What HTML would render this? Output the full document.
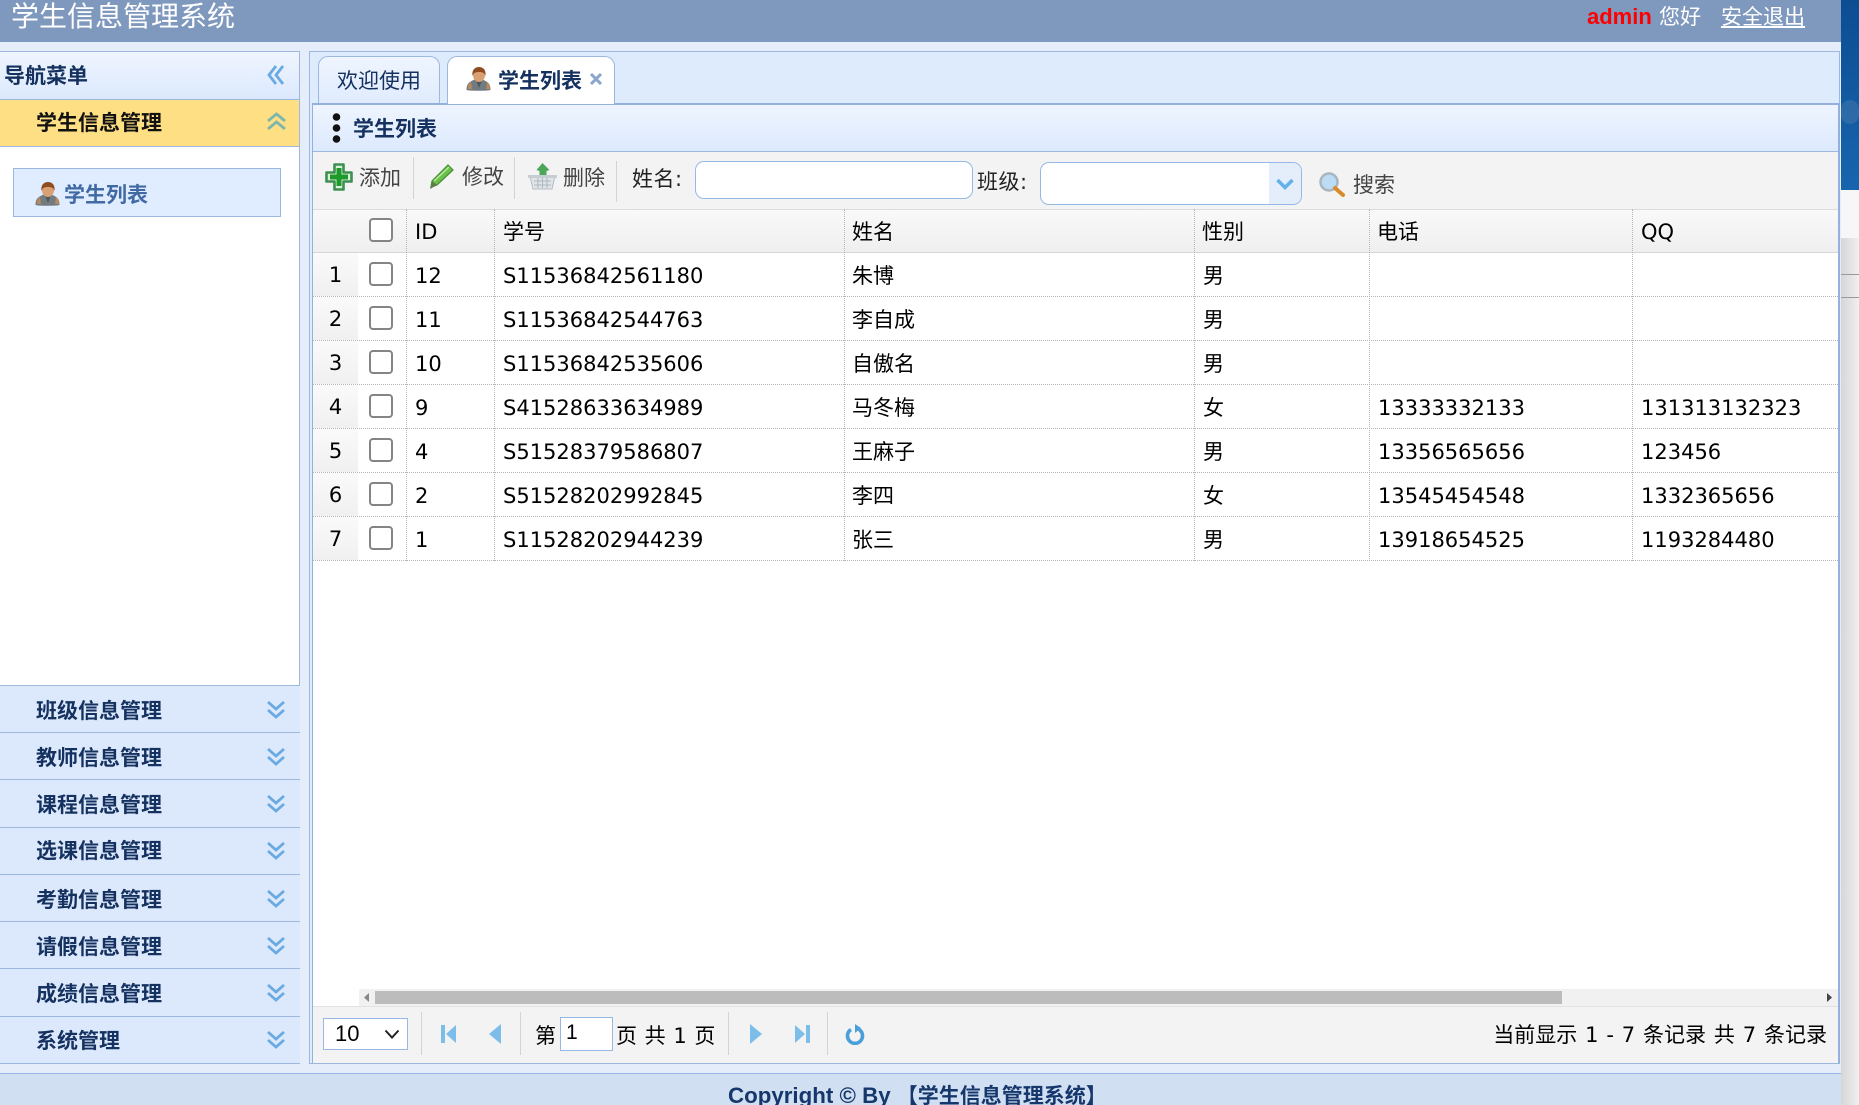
<!DOCTYPE html>
<html lang="zh">
<head>
<meta charset="utf-8">
<title>学生信息管理系统</title>
<style>
html,body{margin:0;padding:0;width:1859px;height:1105px;overflow:hidden;background:#fff;}
body{position:relative;font-family:"DejaVu Sans","Noto Sans CJK SC",sans-serif;font-size:21px;color:#000;}
div,span,svg{position:absolute;box-sizing:border-box;}
.t{white-space:nowrap;line-height:30px;height:30px;}
.t span{position:static;}
.menu{left:0;width:300px;height:48px;background:#dce9fd;border-top:1px solid #9cb8df;}
.menu .t{left:36px;top:10px;font-weight:bold;color:#14315f;}
.menu svg{left:267px;top:15px;}
.row{left:313px;width:1525px;height:44px;border-bottom:1px dotted #b5b5b5;background:#fff;line-height:43px;}
.row span{white-space:nowrap;top:2px;line-height:43px;}
.row .num{top:0;left:0;width:45px;height:43px;line-height:45px;background:linear-gradient(#fafafa,#f0f0f0);text-align:center;}
.cb{width:24px;height:24px;border:2px solid #858585;border-radius:4px;background:#fff;left:56px;top:9px;}
.c1{left:102px}.c2{left:190px}.c3{left:539px}.c4{left:890px}.c5{left:1065px}.c6{left:1328px}
.vl{top:209px;width:1px;height:352px;border-left:1px dotted #b5b5b5;}
.sep{width:1px;background:#d3d3d3;}
.btn{color:#444;}
</style>
</head>
<body>
<!-- right strip -->
<div style="left:1841px;top:0;width:18px;height:190px;background:linear-gradient(#0c4d92,#1765ae);"></div>
<div style="left:1841px;top:100px;width:18px;height:24px;background:#5f86b3;border-radius:10px;opacity:.35;"></div>
<div style="left:1841px;top:190px;width:18px;height:48px;background:#f7f7f7;"></div>
<div style="left:1841px;top:238px;width:18px;height:867px;background:linear-gradient(90deg,#d6d6d6,#f0f0f0);"></div>
<div style="left:1841px;top:274px;width:18px;height:1px;background:#999;"></div>
<div style="left:1841px;top:297px;width:18px;height:1px;background:#999;"></div>

<!-- page bg -->
<div style="left:0;top:0;width:1841px;height:1105px;background:#e4edf9;"></div>
<!-- header -->
<div style="left:0;top:0;width:1841px;height:42px;background:#7f99be;"></div>
<div class="t" style="left:11px;top:2px;font-size:28px;color:#fff;">学生信息管理系统</div>
<div class="t" style="left:1587px;top:2px;font-family:'Liberation Sans','Noto Sans CJK SC',sans-serif;font-weight:bold;font-size:22px;color:#f00;">admin</div>
<div class="t" style="left:1659px;top:2px;color:#fff;">您好</div>
<div class="t" style="left:1721px;top:2px;color:#fff;text-decoration:underline;">安全退出</div>

<!-- sidebar -->
<div style="left:0;top:51px;width:300px;height:1013px;background:#fff;border:1px solid #9cb8df;border-left:0;"></div>
<div style="left:0;top:52px;width:299px;height:47px;background:linear-gradient(#eff5ff,#dce9fd);"></div>
<div class="t" style="left:4px;top:61px;font-weight:bold;color:#14315f;">导航菜单</div>
<svg style="left:267px;top:65px;" width="18" height="20" viewBox="0 0 18 20" fill="none" stroke="#6aaae2" stroke-width="2.8"><path d="M9 1L2 10l7 9M16 1L9 10l7 9"/></svg>

<div style="left:0;top:99px;width:299px;height:48px;background:#ffdf84;border-top:1px solid #9cb8df;border-bottom:1px solid #9cb8df;"></div>
<div class="t" style="left:36px;top:108px;font-weight:bold;color:#111;">学生信息管理</div>
<svg style="left:267px;top:112px;" width="19" height="18" viewBox="0 0 19 18" fill="none" stroke="#7fb6ac" stroke-width="2.8"><path d="M1 9l8.500-7 8.500 7M1 17l8.500-7 8.500 7"/></svg>

<div style="left:13px;top:168px;width:268px;height:49px;background:#e0ecff;border:1px solid #9cb8df;"></div>
<svg style="left:35px;top:182px;" width="26" height="24" viewBox="0 0 26 24"><path d="M0.500 23c0-5 1.500-7 5-9l3-1.500h8l3 1.500c3.500 2 5 4 5 9c-3 1-21 1-24 0z" fill="#727b80"/><path d="M2 22c0-4 1-6 3-7l1 7z" fill="#b98a5c"/><path d="M24 22c0-4-1-6-3-7l-1 7z" fill="#b98a5c"/><path d="M10 13l3 8 3-8z" fill="#4e555c"/><ellipse cx="13" cy="8" rx="6" ry="7" fill="#d9a074"/><path d="M6.500 9C5.500 2 10 0 13 0s7.500 2 6.500 9C18.500 6 17 5 13 5S7.500 6 6.500 9z" fill="#8f4d1f"/></svg>
<div class="t" style="left:64px;top:180px;font-weight:bold;color:#416aa3;">学生列表</div>

<div class="menu" style="top:685px;"><div class="t">班级信息管理</div><svg width="18" height="18" viewBox="0 0 18 18" fill="none" stroke="#6aaae2" stroke-width="2.8"><path d="M1 1l8 7 8-7M1 9l8 7 8-7"/></svg></div>
<div class="menu" style="top:732px;"><div class="t">教师信息管理</div><svg width="18" height="18" viewBox="0 0 18 18" fill="none" stroke="#6aaae2" stroke-width="2.8"><path d="M1 1l8 7 8-7M1 9l8 7 8-7"/></svg></div>
<div class="menu" style="top:779px;"><div class="t">课程信息管理</div><svg width="18" height="18" viewBox="0 0 18 18" fill="none" stroke="#6aaae2" stroke-width="2.8"><path d="M1 1l8 7 8-7M1 9l8 7 8-7"/></svg></div>
<div class="menu" style="top:827px;"><div class="t" style="top:8px;">选课信息管理</div><svg style="top:14px;" width="18" height="18" viewBox="0 0 18 18" fill="none" stroke="#6aaae2" stroke-width="2.8"><path d="M1 1l8 7 8-7M1 9l8 7 8-7"/></svg></div>
<div class="menu" style="top:874px;"><div class="t">考勤信息管理</div><svg width="18" height="18" viewBox="0 0 18 18" fill="none" stroke="#6aaae2" stroke-width="2.8"><path d="M1 1l8 7 8-7M1 9l8 7 8-7"/></svg></div>
<div class="menu" style="top:921px;"><div class="t">请假信息管理</div><svg width="18" height="18" viewBox="0 0 18 18" fill="none" stroke="#6aaae2" stroke-width="2.8"><path d="M1 1l8 7 8-7M1 9l8 7 8-7"/></svg></div>
<div class="menu" style="top:968px;"><div class="t">成绩信息管理</div><svg width="18" height="18" viewBox="0 0 18 18" fill="none" stroke="#6aaae2" stroke-width="2.8"><path d="M1 1l8 7 8-7M1 9l8 7 8-7"/></svg></div>
<div class="menu" style="top:1016px;height:48px;border-bottom:1px solid #9cb8df;"><div class="t" style="top:9px;">系统管理</div><svg style="top:14px;" width="18" height="18" viewBox="0 0 18 18" fill="none" stroke="#6aaae2" stroke-width="2.8"><path d="M1 1l8 7 8-7M1 9l8 7 8-7"/></svg></div>

<!-- main panel -->
<div style="left:309px;top:51px;width:1531px;height:1013px;background:#deebfd;border:1px solid #9cb8df;"></div>
<!-- tabs -->
<div style="left:318px;top:56px;width:122px;height:48px;background:linear-gradient(#eff5ff,#dfebfd);border:1px solid #9cb8df;border-bottom:0;border-radius:10px 10px 0 0;"></div>
<div class="t" style="left:337px;top:66px;color:#14315f;">欢迎使用</div>
<div style="left:447px;top:56px;width:168px;height:48px;background:#fff;border:1px solid #9cb8df;border-bottom:0;border-radius:10px 10px 0 0;z-index:2;"></div>
<svg style="left:466px;top:67px;z-index:3;" width="26" height="24" viewBox="0 0 26 24"><path d="M0.500 23c0-5 1.500-7 5-9l3-1.500h8l3 1.500c3.500 2 5 4 5 9c-3 1-21 1-24 0z" fill="#727b80"/><path d="M2 22c0-4 1-6 3-7l1 7z" fill="#b98a5c"/><path d="M24 22c0-4-1-6-3-7l-1 7z" fill="#b98a5c"/><path d="M10 13l3 8 3-8z" fill="#4e555c"/><ellipse cx="13" cy="8" rx="6" ry="7" fill="#d9a074"/><path d="M6.500 9C5.500 2 10 0 13 0s7.500 2 6.500 9C18.500 6 17 5 13 5S7.500 6 6.500 9z" fill="#8f4d1f"/></svg>
<div class="t" style="left:498px;top:66px;font-weight:bold;color:#14315f;z-index:3;">学生列表</div>
<svg style="left:590px;top:73px;z-index:3;" width="12" height="12" viewBox="0 0 12 12" stroke="#8ba6cc" stroke-width="3"><path d="M1 1l10 10M11 1L1 11"/></svg>

<!-- inner -->
<div style="left:312px;top:103px;width:1528px;height:960px;background:#fff;border:2px solid #95b0de;border-width:2px 2px 1px 1px;"></div>
<div style="left:313px;top:105px;width:1525px;height:47px;background:linear-gradient(#eff5ff,#dcE9fd);border-bottom:1px solid #9cb8df;"></div>
<svg style="left:331px;top:112px;" width="11" height="32" viewBox="0 0 11 32" fill="#111"><circle cx="5.500" cy="5" r="3.800"/><circle cx="5.500" cy="16" r="3.800"/><circle cx="5.500" cy="27" r="3.800"/></svg>
<div class="t" style="left:353px;top:114px;font-weight:bold;color:#14315f;">学生列表</div>

<!-- toolbar -->
<div style="left:313px;top:152px;width:1525px;height:57px;background:#f3f3f3;"></div>
<svg style="left:325px;top:163px;" width="28" height="28" viewBox="0 0 28 28"><path d="M9.500 1.500h9v8h8v9h-8v8h-9v-8h-8v-9h8z" fill="#d9f2da" stroke="#3f8f52" stroke-width="2.600" stroke-linejoin="round"/><path d="M11.500 5h5v6.500H23v5h-6.500V23h-5v-6.500H5v-5h6.500z" fill="#1c9a2a"/></svg>
<div class="t btn" style="left:359px;top:163px;">添加</div>
<div class="sep" style="left:413px;top:157px;height:42px;"></div>
<svg style="left:428px;top:164px;" width="26" height="26" viewBox="0 0 26 26"><path d="M20 1l5 5L9 21l-6 2 1-6z" fill="#6cc04a" stroke="#3e8e33" stroke-width="1.200"/><path d="M4 17l5 4-7 4z" fill="#5d7a4a"/><path d="M6 17L21 3" stroke="#b5e8a0" stroke-width="1.500"/></svg>
<div class="t btn" style="left:462px;top:162px;">修改</div>
<div class="sep" style="left:514px;top:157px;height:42px;"></div>
<svg style="left:528px;top:163px;" width="29" height="27" viewBox="0 0 29 27"><path d="M14.500 0l7 7-3 1v5h-7V8l-3-1z" fill="#4da65a"/><path d="M2 13h25l-3 13H5z" fill="#dfe4e8" stroke="#b4bdc5"/><path d="M0 12h29v3H0z" fill="#c6ced4"/><path d="M6 18h17M6 22h17M10 15v10M14.500 15v10M19 15v10" stroke="#aeb7bf"/></svg>
<div class="t btn" style="left:563px;top:163px;">删除</div>
<div class="sep" style="left:616px;top:161px;height:41px;"></div>
<div class="t" style="left:632px;top:164px;color:#222;letter-spacing:.5px;">姓名:</div>
<div style="left:695px;top:161px;width:278px;height:38px;background:#fff;border:1px solid #95b8e7;border-radius:9px;"></div>
<div class="t" style="left:977px;top:167px;color:#222;letter-spacing:.5px;">班级:</div>
<div style="left:1040px;top:162px;width:262px;height:43px;background:#fff;border:1px solid #95b8e7;border-radius:9px;overflow:hidden;"><div style="right:0;top:0;width:32px;height:43px;background:#e4eefb;"></div></div>
<svg style="left:1276px;top:178px;" width="18" height="12" viewBox="0 0 18 12" fill="none" stroke="#62b1ec" stroke-width="3.500"><path d="M1.500 2L9 9.500 16.500 2"/></svg>
<svg style="left:1319px;top:172px;" width="26" height="25" viewBox="0 0 26 25"><circle cx="10" cy="10" r="8.500" fill="#bcdcf6" stroke="#a9b6bf" stroke-width="2.500"/><path d="M16 16l8 7" stroke="#d98b2c" stroke-width="4" stroke-linecap="round"/></svg>
<div class="t btn" style="left:1353px;top:170px;">搜索</div>

<!-- grid header -->
<div style="left:313px;top:209px;width:1525px;height:44px;background:linear-gradient(#f9f9f9,#efefef);border-top:1px solid #dcdcdc;border-bottom:1px solid #d6d6d6;"></div>
<div class="cb" style="left:369px;top:218px;"></div>
<div class="t" style="left:415px;top:217px;">ID</div>
<div class="t" style="left:503px;top:217px;">学号</div>
<div class="t" style="left:852px;top:217px;">姓名</div>
<div class="t" style="left:1202px;top:217px;">性别</div>
<div class="t" style="left:1377px;top:217px;">电话</div>
<div class="t" style="left:1641px;top:217px;">QQ</div>

<!-- rows -->
<div class="row" style="top:253px;"><span class="num">1</span><div class="cb"></div><span class="c1">12</span><span class="c2">S11536842561180</span><span class="c3">朱博</span><span class="c4">男</span></div>
<div class="row" style="top:297px;"><span class="num">2</span><div class="cb"></div><span class="c1">11</span><span class="c2">S11536842544763</span><span class="c3">李自成</span><span class="c4">男</span></div>
<div class="row" style="top:341px;"><span class="num">3</span><div class="cb"></div><span class="c1">10</span><span class="c2">S11536842535606</span><span class="c3">自傲名</span><span class="c4">男</span></div>
<div class="row" style="top:385px;"><span class="num">4</span><div class="cb"></div><span class="c1">9</span><span class="c2">S41528633634989</span><span class="c3">马冬梅</span><span class="c4">女</span><span class="c5">13333332133</span><span class="c6">131313132323</span></div>
<div class="row" style="top:429px;"><span class="num">5</span><div class="cb"></div><span class="c1">4</span><span class="c2">S51528379586807</span><span class="c3">王麻子</span><span class="c4">男</span><span class="c5">13356565656</span><span class="c6">123456</span></div>
<div class="row" style="top:473px;"><span class="num">6</span><div class="cb"></div><span class="c1">2</span><span class="c2">S51528202992845</span><span class="c3">李四</span><span class="c4">女</span><span class="c5">13545454548</span><span class="c6">1332365656</span></div>
<div class="row" style="top:517px;"><span class="num">7</span><div class="cb"></div><span class="c1">1</span><span class="c2">S11528202944239</span><span class="c3">张三</span><span class="c4">男</span><span class="c5">13918654525</span><span class="c6">1193284480</span></div>
<div class="vl" style="left:406px;"></div>
<div class="vl" style="left:494px;"></div>
<div class="vl" style="left:844px;"></div>
<div class="vl" style="left:1194px;"></div>
<div class="vl" style="left:1369px;"></div>
<div class="vl" style="left:1632px;"></div>

<!-- scrollbar -->
<div style="left:359px;top:989px;width:1479px;height:17px;background:#f1f1f1;"></div>
<div style="left:375px;top:991px;width:1187px;height:13px;background:#bcbcbc;"></div>
<svg style="left:364px;top:993px;" width="6" height="9" viewBox="0 0 6 9" fill="#888"><path d="M5 0v9L0 4.500z"/></svg>
<svg style="left:1827px;top:993px;" width="6" height="9" viewBox="0 0 6 9" fill="#444"><path d="M0 0v9l5-4.500z"/></svg>

<!-- pager -->
<div style="left:313px;top:1006px;width:1525px;height:57px;background:#f3f3f3;border-top:1px solid #e2e2e2;"></div>
<div style="left:323px;top:1018px;width:85px;height:32px;background:#fff;border:1px solid #95b8e7;"></div>
<div class="t" style="left:335px;top:1019px;font-family:'Liberation Sans',sans-serif;font-size:22px;">10</div>
<svg style="left:384px;top:1029px;" width="16" height="11" viewBox="0 0 16 11" fill="none" stroke="#222" stroke-width="2"><path d="M1.500 1.500L8 8.500l6.500-7"/></svg>
<div class="sep" style="left:421px;top:1012px;height:43px;"></div>
<svg style="left:441px;top:1024px;" width="16" height="20" viewBox="0 0 16 20" fill="#7dbde9"><path d="M0 1h4v18H0zM15 1v18L5 10z"/></svg>
<svg style="left:488px;top:1024px;" width="14" height="20" viewBox="0 0 14 20" fill="#7dbde9"><path d="M13 0v20L1 10z"/></svg>
<div class="sep" style="left:520px;top:1012px;height:43px;"></div>
<div class="t" style="left:535px;top:1021px;">第</div>
<div style="left:560px;top:1017px;width:53px;height:34px;background:#fff;border:1px solid #95b8e7;"></div>
<div class="t" style="left:566px;top:1018px;font-family:'Liberation Sans',sans-serif;">1</div>
<div class="t" style="left:616px;top:1021px;word-spacing:1px;">页 共 1 页</div>
<div class="sep" style="left:728px;top:1012px;height:43px;"></div>
<svg style="left:749px;top:1024px;" width="14" height="20" viewBox="0 0 14 20" fill="#7dbde9"><path d="M1 0v20L13 10z"/></svg>
<svg style="left:794px;top:1024px;" width="16" height="20" viewBox="0 0 16 20" fill="#7dbde9"><path d="M1 1v18L11 10zM12 1h4v18h-4z"/></svg>
<div class="sep" style="left:827px;top:1012px;height:43px;"></div>
<svg style="left:845px;top:1023px;" width="20" height="22" viewBox="0 0 20 22" fill="none" stroke="#4a9fd8" stroke-width="3.600"><path d="M6 6.500a7.500 7.500 0 1 0 8 0"/><path d="M10 1v9l6-5z" fill="#4a9fd8" stroke="none"/></svg>
<div class="t" style="right:32px;top:1020px;word-spacing:1.200px;">当前显示 1 - 7 条记录 共 7 条记录</div>

<!-- footer -->
<div style="left:0;top:1073px;width:1841px;height:32px;background:#d0dff2;border-top:1px solid #95b8e7;"></div>
<div class="t" style="left:728px;top:1081px;font-family:'Liberation Sans','Noto Sans CJK SC',sans-serif;font-weight:bold;font-size:21px;color:#15376c;"><span style="font-size:22.300px;">Copyright © By </span>【学生信息管理系统】</div>
</body>
</html>
